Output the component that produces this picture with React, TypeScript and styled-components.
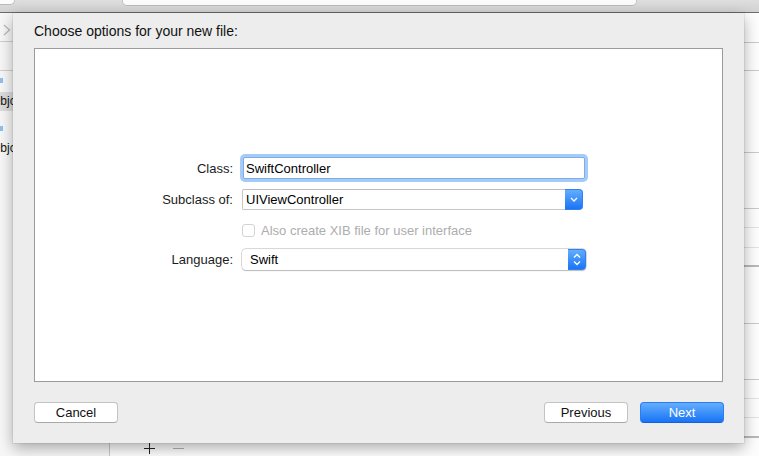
import React from 'react';
import styled, { createGlobalStyle } from 'styled-components';

const Global = createGlobalStyle`
  html, body { margin: 0; padding: 0; }
  body {
    width: 759px;
    height: 456px;
    overflow: hidden;
    background: #fafafa;
    font-family: "Liberation Sans", Arial, Helvetica, sans-serif;
  }
`;

const Window = styled.div`
  position: relative;
  width: 759px;
  height: 456px;
  display: flex;
  flex-direction: column;
  overflow: hidden;
  background: #fafafa;
`;

const Toolbar = styled.div`
  flex: none;
  height: 12px;
  display: flex;
  align-items: flex-start;
  background: linear-gradient(#dedede, #d2d2d2);
  border-bottom: 1px solid #6c6c6c;
`;

const Segment = styled.div<{ $w: number; $ml: number; $h: number; $left?: boolean }>`
  width: ${(p) => p.$w}px;
  height: ${(p) => p.$h}px;
  margin-left: ${(p) => p.$ml}px;
  background: #fbfbfb;
  border-bottom: 1px solid #b9b9b9;
  border-right: 1px solid #c4c4c4;
  border-left: ${(p) => (p.$left ? 'none' : '1px solid #c4c4c4')};
  border-bottom-right-radius: 5px;
  border-bottom-left-radius: ${(p) => (p.$left ? 0 : 5)}px;
  box-sizing: border-box;
`;

const Main = styled.div`
  flex: 1;
  display: flex;
  min-height: 0;
`;

const Navigator = styled.div`
  flex: none;
  width: 110px;
  box-sizing: border-box;
  border-right: 1px solid #c9c9c9;
  background: #f7f7f7;
  display: flex;
  flex-direction: column;
`;

const NavHeader = styled.div`
  height: 29px;
  border-bottom: 1px solid #cfcfcf;
  padding: 9px 0 0 3px;
  box-sizing: border-box;
`;

const NavBar = styled.div`
  height: 29px;
  border-bottom: 1px solid #cfcfcf;
  box-sizing: border-box;
`;

const GroupMark = styled.div<{ $mt: number }>`
  margin-top: ${(p) => p.$mt}px;
  width: 3px;
  height: 5px;
  background: #8cc0ee;
`;

const NavItem = styled.div<{ $selected?: boolean; $mt: number }>`
  margin-top: ${(p) => p.$mt}px;
  height: 19px;
  line-height: 19px;
  font-size: 12px;
  color: #111;
  white-space: nowrap;
  overflow: hidden;
  text-indent: -9px;
  background: ${(p) => (p.$selected ? '#dcdcdc' : 'transparent')};
`;

const Editor = styled.div`
  flex: 1;
  display: flex;
  flex-direction: column;
  background: #fdfdfd;
`;

const EditorRow = styled.div<{ $h: number; $line: string; $bw: number }>`
  flex: none;
  height: ${(p) => p.$h}px;
  box-sizing: border-box;
  border-bottom: ${(p) => p.$bw}px solid ${(p) => p.$line};
`;

const ControlBar = styled.div`
  display: flex;
  align-items: center;
  gap: 18px;
  padding: 5px 0 0 34px;
`;

const Sheet = styled.div`
  position: absolute;
  top: 13px;
  left: 13px;
  width: 731px;
  height: 430px;
  box-sizing: border-box;
  padding: 10px 21px 20px;
  background: #ededed;
  display: flex;
  flex-direction: column;
  box-shadow: 0 5px 14px rgba(0, 0, 0, 0.32), 0 0 0 1px rgba(0, 0, 0, 0.06);
`;

const Title = styled.div`
  height: 16px;
  line-height: 16px;
  font-size: 14px;
  color: #111;
`;

const Panel = styled.div`
  margin-top: 9px;
  height: 334px;
  box-sizing: border-box;
  border: 1px solid #9b9b9b;
  background: #fff;
  padding-top: 105px;
  display: flex;
  flex-direction: column;
`;

const FormRow = styled.div<{ $h: number; $mt: number }>`
  height: ${(p) => p.$h}px;
  margin-top: ${(p) => p.$mt}px;
  display: grid;
  grid-template-columns: 198px 348px;
  column-gap: 7px;
  align-items: center;
`;

const Label = styled.div`
  text-align: right;
  font-size: 13px;
  color: #1c1c1c;
`;

const TextField = styled.div`
  margin-left: 3px;
  width: 342px;
  height: 22px;
  box-sizing: border-box;
  border: 1px solid #7fabe6;
  border-radius: 2px;
  box-shadow: 0 0 0 3px #a5cbf9;
  background: #fff;
  padding-left: 2px;
  display: flex;
  align-items: center;
  font-size: 13px;
  color: #000;
`;

const Combo = styled.div`
  margin-left: 2px;
  width: 341px;
  height: 21px;
  display: flex;
`;

const ComboText = styled.div`
  flex: 1;
  box-sizing: border-box;
  border: 1px solid #c6c6c6;
  border-right: none;
  border-top-color: #bdbdbd;
  border-radius: 2px 0 0 2px;
  background: #fff;
  padding-left: 3px;
  display: flex;
  align-items: center;
  font-size: 13px;
  color: #000;
`;

const Cap = styled.div`
  flex: none;
  width: 18px;
  height: 100%;
  box-sizing: border-box;
  border-radius: 0 4px 4px 0;
  background: linear-gradient(#62adfd, #1a74f5);
  border: 1px solid #2f82f0;
  border-left: none;
  display: flex;
  align-items: center;
  justify-content: center;
`;

const PopUp = styled.div`
  margin-left: 2px;
  width: 344px;
  height: 21px;
  box-sizing: border-box;
  display: flex;
  border-radius: 4px;
  box-shadow: 0 0 0 0.5px #b8b8b8, 0 0.5px 1px rgba(0, 0, 0, 0.25);
  background: #fff;
`;

const PopUpText = styled.div`
  flex: 1;
  padding-left: 8px;
  display: flex;
  align-items: center;
  font-size: 13px;
  color: #000;
`;

const CheckRow = styled.div`
  margin-left: 2px;
  display: flex;
  align-items: center;
  gap: 6px;
  font-size: 13px;
  color: #adadad;
`;

const CheckBox = styled.div`
  width: 13px;
  height: 13px;
  box-sizing: border-box;
  border: 1px solid #d3d3d3;
  border-radius: 3px;
  background: #fff;
`;

const Footer = styled.div`
  margin-top: 20px;
  margin-right: -1px;
  display: flex;
  align-items: center;
  gap: 12px;
`;

const Spacer = styled.div`
  flex: 1;
`;

const Button = styled.div<{ $primary?: boolean }>`
  width: 84px;
  height: 21px;
  box-sizing: border-box;
  border-radius: 4px;
  display: flex;
  align-items: center;
  justify-content: center;
  font-size: 13px;
  color: ${(p) => (p.$primary ? '#fff' : '#111')};
  background: ${(p) => (p.$primary ? 'linear-gradient(#64aefd, #1874f5)' : '#fff')};
  border: 1px solid ${(p) => (p.$primary ? '#2a7ef3' : '#c3c3c3')};
  border-bottom-color: ${(p) => (p.$primary ? '#1660e0' : '#a9a9a9')};
`;

const Chevron = () => (
  <svg width="8" height="12" viewBox="0 0 8 12">
    <polyline points="1,1 6.5,6 1,11" fill="none" stroke="#b9b9b9" strokeWidth="1.3" />
  </svg>
);

const DownArrow = () => (
  <svg width="8" height="5" viewBox="0 0 8 5">
    <polyline points="1,1 4,4 7,1" fill="none" stroke="#fff" strokeWidth="1.3" />
  </svg>
);

const UpDownArrow = () => (
  <svg width="8" height="13" viewBox="0 0 8 13">
    <polyline points="1,4.5 4,1.5 7,4.5" fill="none" stroke="#fff" strokeWidth="1.3" />
    <polyline points="1,8.5 4,11.5 7,8.5" fill="none" stroke="#fff" strokeWidth="1.3" />
  </svg>
);

const PlusIcon = () => (
  <svg width="11" height="11" viewBox="0 0 11 11">
    <line x1="5.5" y1="0" x2="5.5" y2="11" stroke="#222" strokeWidth="1" />
    <line x1="0" y1="5.5" x2="11" y2="5.5" stroke="#222" strokeWidth="1" />
  </svg>
);

const MinusIcon = () => (
  <svg width="11" height="11" viewBox="0 0 11 11">
    <line x1="0" y1="5.5" x2="11" y2="5.5" stroke="#b0b0b0" strokeWidth="1" />
  </svg>
);

const editorRows: { h: number; line: string; bw: number }[] = [
  { h: 30, line: '#c9c9c9', bw: 1 },
  { h: 28, line: '#c9c9c9', bw: 1 },
  { h: 82, line: '#c9c9c9', bw: 1 },
  { h: 56, line: '#c9c9c9', bw: 1 },
  { h: 19, line: '#e2e2e2', bw: 1 },
  { h: 20, line: '#e2e2e2', bw: 1 },
  { h: 19, line: '#b8b8b8', bw: 2 },
  { h: 57, line: '#c9c9c9', bw: 1 },
  { h: 56, line: '#c9c9c9', bw: 1 },
  { h: 19, line: '#e2e2e2', bw: 1 },
  { h: 19, line: '#e2e2e2', bw: 1 },
  { h: 20, line: '#b8b8b8', bw: 2 },
];

export default function App() {
  return (
    <>
      <Global />
      <Window>
        <Toolbar>
          <Segment $w={15} $ml={0} $h={5} $left />
          <Segment $w={515} $ml={107} $h={6} />
        </Toolbar>
        <Main>
          <Navigator>
            <NavHeader>
              <Chevron />
            </NavHeader>
            <NavBar />
            <GroupMark $mt={7} />
            <NavItem $selected $mt={9}>Objc</NavItem>
            <GroupMark $mt={15} />
            <NavItem $mt={8}>Objc</NavItem>
          </Navigator>
          <Editor>
            {editorRows.map((r, i) => (
              <EditorRow key={i} $h={r.h} $line={r.line} $bw={r.bw} />
            ))}
            <ControlBar>
              <PlusIcon />
              <MinusIcon />
            </ControlBar>
          </Editor>
        </Main>

        <Sheet>
          <Title>Choose options for your new file:</Title>
          <Panel>
            <FormRow $h={28} $mt={0}>
              <Label>Class:</Label>
              <TextField>SwiftController</TextField>
            </FormRow>
            <FormRow $h={21} $mt={7}>
              <Label>Subclass of:</Label>
              <Combo>
                <ComboText>UIViewController</ComboText>
                <Cap>
                  <DownArrow />
                </Cap>
              </Combo>
            </FormRow>
            <FormRow $h={17} $mt={12}>
              <div />
              <CheckRow>
                <CheckBox />
                Also create XIB file for user interface
              </CheckRow>
            </FormRow>
            <FormRow $h={21} $mt={10}>
              <Label>Language:</Label>
              <PopUp>
                <PopUpText>Swift</PopUpText>
                <Cap>
                  <UpDownArrow />
                </Cap>
              </PopUp>
            </FormRow>
          </Panel>
          <Footer>
            <Button>Cancel</Button>
            <Spacer />
            <Button>Previous</Button>
            <Button $primary>Next</Button>
          </Footer>
        </Sheet>
      </Window>
    </>
  );
}
